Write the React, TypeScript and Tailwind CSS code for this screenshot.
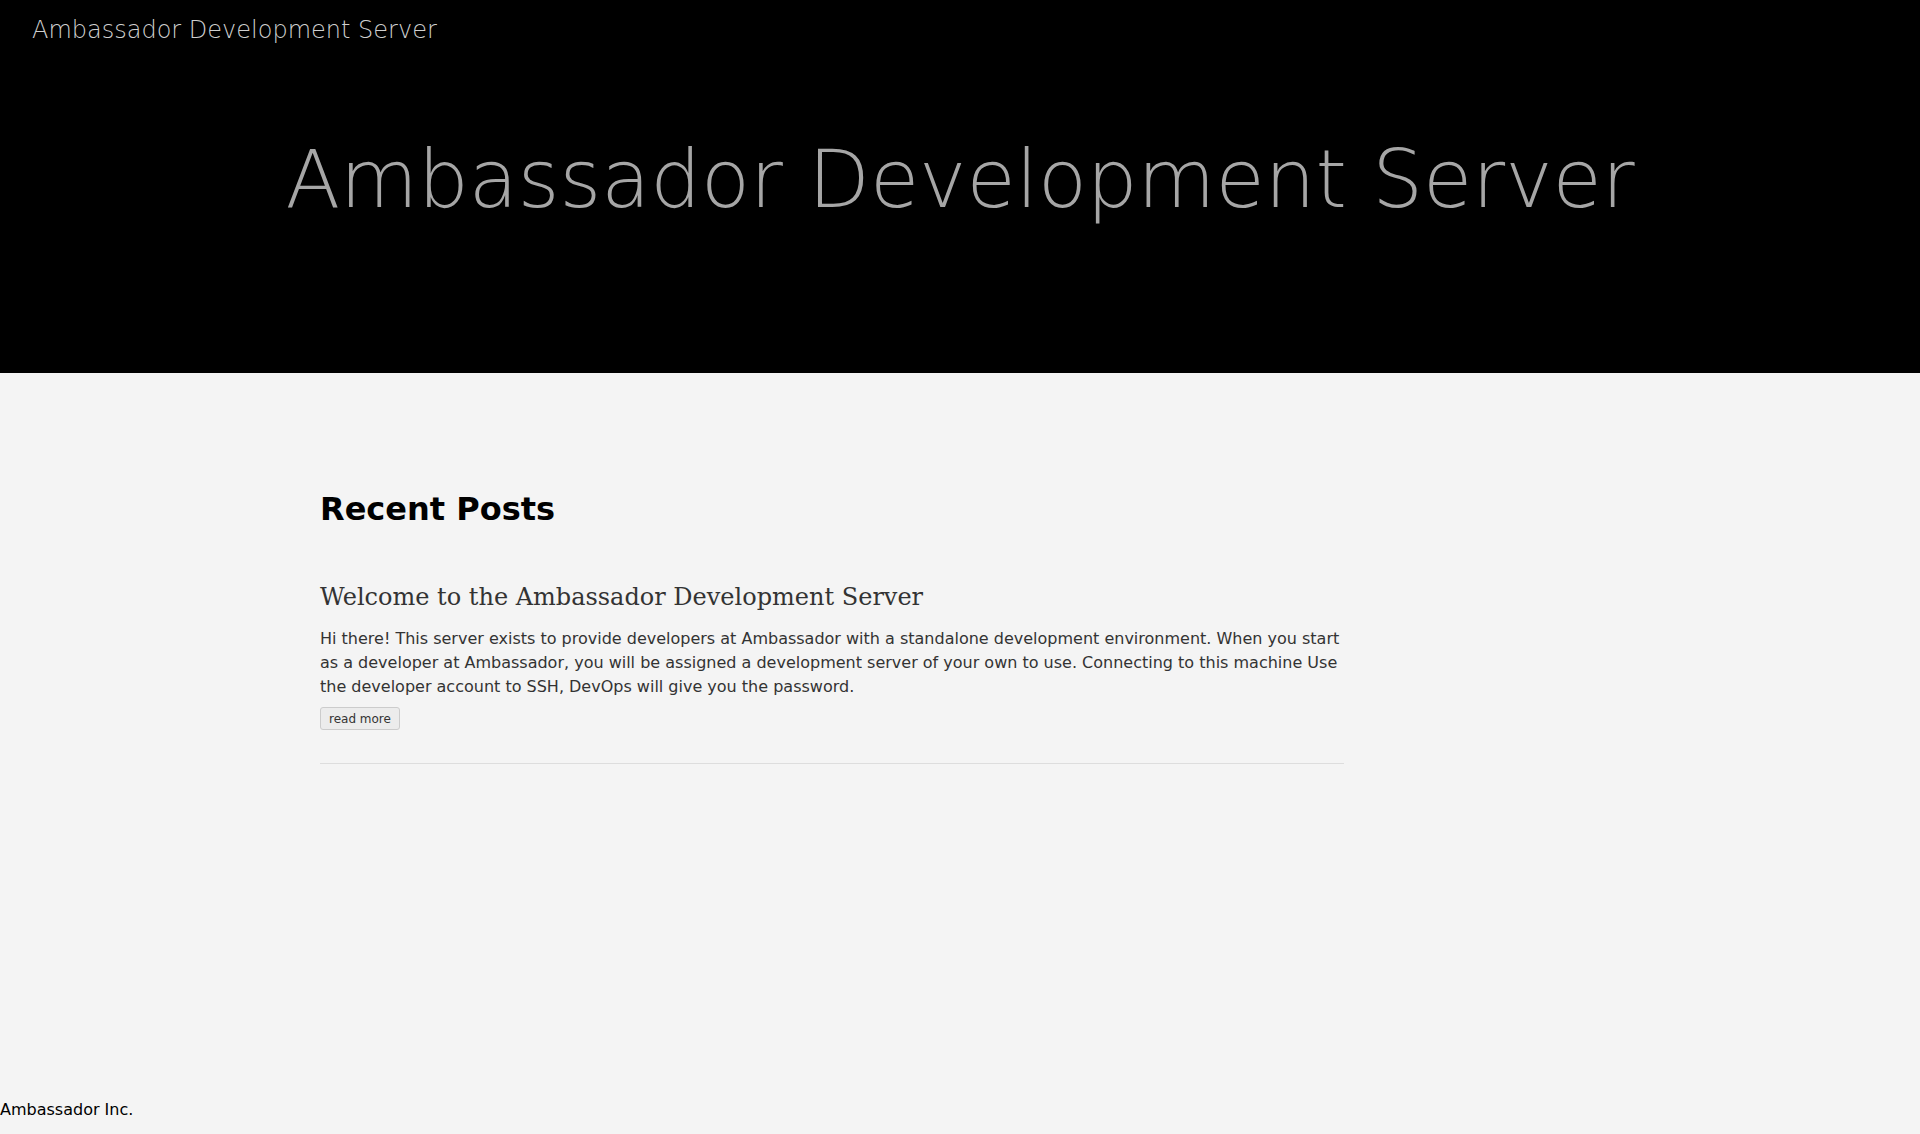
export default function App() {
  return (
    <div className="min-h-screen flex flex-col bg-[#f4f4f4] font-['DejaVu_Sans',sans-serif]">
      <header className="bg-black h-[373px] pt-4">
        <div className="px-8 text-[24px] leading-[28px] font-extralight text-[#cfcfcf]">
          Ambassador Development Server
        </div>
        <h1 className="mt-[89px] text-center text-[80px] leading-[93px] font-extralight text-[#a6a6a6]">
          Ambassador Development Server
        </h1>
      </header>

      <main className="flex-1 pt-[118px]">
        <div className="ml-[320px] w-[1024px]">
          <h2 className="text-[32px] leading-[37px] font-bold text-black">Recent Posts</h2>

          <article className="mt-[55px] pb-[33px] border-b border-[#dddddd]">
            <h3 className="font-['DejaVu_Serif',serif] text-[24px] leading-[28px] text-[#333]">
              Welcome to the Ambassador Development Server
            </h3>
            <p className="mt-4 text-[16px] leading-6 text-[#333]">
              Hi there! This server exists to provide developers at Ambassador with a standalone
              development environment. When you start as a developer at Ambassador, you will be
              assigned a development server of your own to use. Connecting to this machine Use the
              developer account to SSH, DevOps will give you the password.
            </p>
            <button className="mt-2 h-[23px] px-[8px] text-[12px] leading-none text-[#333] bg-[#ececec] border border-[#cccccc] rounded-[3px]">
              read more
            </button>
          </article>
        </div>
      </main>

      <footer className="pb-3 text-[16px] text-black">Ambassador Inc.</footer>
    </div>
  );
}
